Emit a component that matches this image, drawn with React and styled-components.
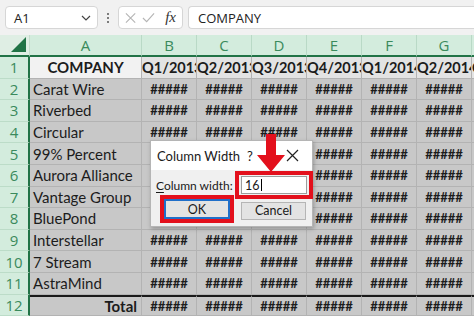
import React from 'react'
import styled, { createGlobalStyle } from 'styled-components'

const GlobalStyle = createGlobalStyle`
  body {
    margin: 0;
    overflow: hidden;
    background: #ffffff;
    font-family: "Open Sans", "Noto Sans", sans-serif;
  }
`

const Page = styled.div`
  position: relative;
  width: 474px;
  height: 319px;
  overflow: hidden;
`

const Toolbar = styled.div`
  height: 35px;
  background: #f1f1f1;
  display: flex;
  align-items: flex-start;
  padding: 6px 0 0 5px;
  box-sizing: border-box;
`

const NameBox = styled.div`
  width: 93px;
  height: 23px;
  box-sizing: border-box;
  background: #fff;
  border: 1px solid #d6d6d6;
  border-radius: 4px;
  display: flex;
  align-items: center;
  justify-content: space-between;
  padding: 0 6px 0 8px;
  font-size: 13px;
  color: #222;
`

const Dots = styled.div`
  width: 20px;
  height: 23px;
  display: flex;
  flex-direction: column;
  align-items: center;
  justify-content: center;
  gap: 2px;
  span {
    width: 2px;
    height: 2px;
    background: #555;
    border-radius: 1px;
  }
`

const IconBox = styled.div`
  width: 65px;
  height: 23px;
  box-sizing: border-box;
  background: #fff;
  border: 1px solid #d6d6d6;
  border-radius: 4px;
  display: flex;
  align-items: center;
  padding: 0 6px;
  gap: 6px;
`

const Fx = styled.span`
  font-family: "Liberation Serif", serif;
  font-style: italic;
  font-size: 15px;
  color: #333;
  margin-left: 4px;
`

const Formula = styled.div`
  flex: 1;
  height: 23px;
  margin-left: 5px;
  box-sizing: border-box;
  background: #fff;
  border: 1px solid #d6d6d6;
  border-right: none;
  border-radius: 4px 0 0 4px;
  display: flex;
  align-items: center;
  padding-left: 9px;
  font-size: 13px;
  color: #222;
`

const Sheet = styled.div`
  display: grid;
  grid-template-columns: 30px 112px repeat(7, 55px);
  grid-template-rows: 22px repeat(12, 21.6px);
  font-family: Lato, "Liberation Sans", sans-serif;
`

const Corner = styled.div`
  background: #dfeee4;
  border-right: 1px solid #c4dccd;
  border-bottom: 2px solid #217346;
  box-sizing: border-box;
  position: relative;
  svg {
    position: absolute;
    right: 3px;
    bottom: 3px;
  }
`

const ColHead = styled.div`
  background: #d3ecdd;
  border-right: 1px solid #b9d9c6;
  border-bottom: 2px solid #217346;
  box-sizing: border-box;
  display: flex;
  align-items: center;
  justify-content: center;
  color: #3a8a5c;
  font-size: 15px;
  font-family: "Open Sans", sans-serif;
`

const RowHead = styled.div`
  background: #d3ecdd;
  border-right: 2px solid #217346;
  border-bottom: 1px solid #bcdcc8;
  box-sizing: border-box;
  display: flex;
  align-items: center;
  justify-content: center;
  color: #3a8a5c;
  font-size: 15px;
  font-family: "Open Sans", sans-serif;
`

const Cell = styled.div`
  background: ${p => (p.$active ? '#f2f2f2' : p.$head ? '#e3e3e3' : '#c8c8c8')};
  border-right: 1px solid #b3b3b3;
  border-bottom: 1px solid #b3b3b3;
  border-top: ${p => (p.$total ? '2px solid #1a1a1a' : 'none')};
  box-sizing: border-box;
  display: flex;
  align-items: center;
  justify-content: ${p => p.$align || 'flex-start'};
  padding: 0 ${p => (p.$align === 'flex-end' ? '4px' : p.$head ? '0' : '3px')};
  overflow: hidden;
  white-space: nowrap;
  font-size: ${p => (p.$hash ? '13px' : p.$head ? '14.5px' : '15px')};
  font-weight: ${p => (p.$bold ? 700 : 400)};
  color: #1c1c1c;
`

const Dialog = styled.div`
  position: absolute;
  left: 150px;
  top: 140px;
  width: 163px;
  height: 87px;
  box-sizing: border-box;
  background: #f0f0f0;
  border: 1px solid #b5b5b5;
  box-shadow: 1px 2px 4px rgba(0, 0, 0, 0.25);
  font-family: Lato, "Liberation Sans", sans-serif;
  font-size: 12.5px;
  color: #1a1a1a;
`

const TitleBar = styled.div`
  height: 29px;
  background: #fff;
  display: flex;
  align-items: center;
  padding: 0 0 0 6px;
  font-size: 13px;
`

const Title = styled.span`
  flex: 1;
  white-space: nowrap;
`

const Help = styled.span`
  width: 12px;
  font-size: 13px;
  margin-right: 27px;
`

const CloseX = styled.span`
  width: 26px;
  display: flex;
  align-items: center;
`

const Body = styled.div`
  padding: 1px 0 0 4px;
  display: flex;
  flex-direction: column;
`

const FieldRow = styled.div`
  display: flex;
  align-items: center;
  justify-content: space-between;
`

const Label = styled.span`
  padding-left: 1px;
  font-size: 12px;
  white-space: nowrap;
  u {
    text-decoration: underline;
    text-underline-offset: 2px;
  }
`

const Highlight = styled.div`
  flex-shrink: 0;
  border: 4px solid #e3101c;
  padding: ${p => p.$pad || '0'};
  margin-right: ${p => p.$shift || '0'};
  box-sizing: border-box;
`

const Input = styled.div`
  width: 66px;
  height: 18px;
  box-sizing: border-box;
  background: #fff;
  border: 1px solid #9c9c9c;
  display: flex;
  align-items: center;
  padding-left: 3px;
  span {
    display: inline-block;
    width: 1px;
    height: 12px;
    background: #000;
    margin-left: 1px;
  }
`

const ButtonRow = styled.div`
  display: flex;
  align-items: center;
  margin-top: -4px;
  padding-left: 5px;
  gap: 7px;
`

const Button = styled.div`
  width: ${p => (p.$primary ? '66px' : '65px')};
  height: ${p => (p.$primary ? '20px' : '18px')};
  box-sizing: border-box;
  background: #e3e3e3;
  border: ${p => (p.$primary ? '2px solid #1f6fc9' : '1px solid #b5b5b5')};
  display: flex;
  align-items: center;
  justify-content: center;
  margin-top: ${p => (p.$primary ? '0' : '3px')};
`

const Arrow = styled.svg`
  position: absolute;
  left: 257px;
  top: 134px;
`

const cols = ['A', 'B', 'C', 'D', 'E', 'F', 'G', '']
const heads = ['Q1/2013', 'Q2/2013', 'Q3/2013', 'Q4/2013', 'Q1/2014', 'Q2/2014', 'Q3/2014']
const companies = [
  'Carat Wire',
  'Riverbed',
  'Circular',
  '99% Percent',
  'Aurora Alliance',
  'Vantage Group',
  'BluePond',
  'Interstellar',
  '7 Stream',
  'AstraMind',
]

function Row({ n, name, total }) {
  return (
    <>
      <RowHead>{n}</RowHead>
      <Cell $bold={total} $total={total} $align={total ? 'flex-end' : undefined}>
        {name}
      </Cell>
      {heads.map(h => (
        <Cell key={h} $hash $bold $total={total} $align="center">
          #####
        </Cell>
      ))}
    </>
  )
}

export default function App() {
  return (
    <Page>
      <GlobalStyle />
      <Toolbar>
        <NameBox>
          A1
          <svg width="10" height="6" viewBox="0 0 10 6">
            <path d="M1 1 L5 5 L9 1" fill="none" stroke="#444" strokeWidth="1.2" />
          </svg>
        </NameBox>
        <Dots>
          <span />
          <span />
          <span />
        </Dots>
        <IconBox>
          <svg width="12" height="12" viewBox="0 0 12 12">
            <path d="M1 1 L11 11 M11 1 L1 11" stroke="#b5b5b5" strokeWidth="1.2" />
          </svg>
          <svg width="14" height="12" viewBox="0 0 14 12">
            <path d="M1 6 L5 10 L13 1" fill="none" stroke="#b5b5b5" strokeWidth="1.2" />
          </svg>
          <Fx>fx</Fx>
        </IconBox>
        <Formula>COMPANY</Formula>
      </Toolbar>

      <Sheet>
        <Corner>
          <svg width="15" height="15" viewBox="0 0 15 15">
            <path d="M15 0 L15 15 L0 15 Z" fill="#217346" />
          </svg>
        </Corner>
        {cols.map((c, i) => (
          <ColHead key={i}>{c}</ColHead>
        ))}

        <RowHead>1</RowHead>
        <Cell $active $bold $align="center">
          COMPANY
        </Cell>
        {heads.map(h => (
          <Cell key={h} $head $bold>
            {h}
          </Cell>
        ))}

        {companies.map((c, i) => (
          <Row key={c} n={i + 2} name={c} />
        ))}
        <Row n={12} name="Total" total />
      </Sheet>

      <Dialog>
        <TitleBar>
          <Title>Column Width</Title>
          <Help>?</Help>
          <CloseX>
            <svg width="13" height="13" viewBox="0 0 13 13">
              <path d="M1 1 L12 12 M12 1 L1 12" stroke="#222" strokeWidth="1.2" />
            </svg>
          </CloseX>
        </TitleBar>
        <Body>
          <FieldRow>
            <Label>
              <u>C</u>olumn width:
            </Label>
            <Highlight $pad="1px 2px 1px 2px" $shift="-1px">
              <Input>
                16<span />
              </Input>
            </Highlight>
          </FieldRow>
          <ButtonRow>
            <Highlight>
              <Button $primary>OK</Button>
            </Highlight>
            <Button>Cancel</Button>
          </ButtonRow>
        </Body>
      </Dialog>

      <Arrow width="28" height="39" viewBox="0 0 28 39">
        <path d="M9 0 H19 V21 H28 L14 38 L0 21 H9 Z" fill="#e3101c" />
      </Arrow>
    </Page>
  )
}
